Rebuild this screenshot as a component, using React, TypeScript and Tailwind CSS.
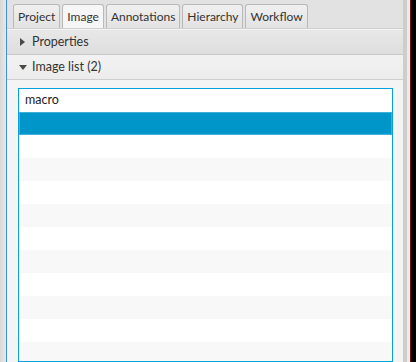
import React from "react";

const tabs = ["Project", "Image", "Annotations", "Hierarchy", "Workflow"];

function Chevron({ open }: { open: boolean }) {
  return (
    <svg width="10" height="10" viewBox="0 0 10 10" className="shrink-0">
      {open ? (
        <polygon points="1,3 9,3 5,8" fill="#4a4a4a" />
      ) : (
        <polygon points="2,1 7,5 2,9" fill="#4a4a4a" />
      )}
    </svg>
  );
}

export default function App() {
  const rows = Array.from({ length: 12 });

  return (
    <div
      className="w-[416px] h-[362px] flex overflow-hidden bg-[#e4e4e4] text-[12px] text-[#333]"
      style={{ fontFamily: "Lato, 'Open Sans', sans-serif" }}
    >
      {/* left gutter */}
      <div className="w-[6px] bg-gradient-to-r from-[#d8d8d8] to-[#e8e8e8]" />

      {/* main pane */}
      <div className="w-[397px] flex flex-col border-l border-[#3b8fdd] bg-[#f4f4f4]">
        {/* tab strip */}
        <div className="h-[29px] bg-[#e2e2e2] flex items-end gap-[2px] pl-[6px] border-b border-[#cfcfcf]">
          {tabs.map((t) => (
            <div
              key={t}
              className={
                "h-[24px] px-[4px] flex items-center rounded-t-[3px] border border-b-0 border-[#b9b9b9] text-[12px] " +
                (t === "Image"
                  ? "bg-[#f6f6f6]"
                  : "bg-gradient-to-b from-[#f0f0f0] to-[#e2e2e2]")
              }
            >
              {t}
            </div>
          ))}
        </div>

        {/* Properties header */}
        <div className="h-[26px] flex items-center gap-[4px] pl-[11px] text-[12.5px] bg-gradient-to-b from-[#e8e8e8] to-[#dedede] border-b border-[#c9c9c9] border-t border-t-[#f4f4f4]">
          <Chevron open={false} />
          <span>Properties</span>
        </div>

        {/* Image list header */}
        <div className="h-[25px] flex items-center gap-[4px] pl-[11px] text-[12.5px] bg-gradient-to-b from-[#f2f2f2] to-[#ececec] border-b border-[#cfcfcf]">
          <Chevron open={true} />
          <span>Image list (2)</span>
        </div>

        {/* list */}
        <div className="flex-1 pt-[8px] pl-[11px] pr-[10px] bg-[#f4f4f4] min-h-0">
          <div className="h-full border border-[#0aa2dc] bg-white overflow-hidden">
            <div className="h-[23px] flex items-center pl-[6px] bg-white text-[#222] text-[12.5px]">
              macro
            </div>
            <div className="h-[23px] bg-[#0096c9] border border-[#3fb0da]" />
            {rows.map((_, i) => (
              <div
                key={i}
                className={"h-[23px] " + (i % 2 === 0 ? "bg-white" : "bg-[#f8f8f8]")}
              />
            ))}
          </div>
        </div>
      </div>

      {/* right edge */}
      <div className="w-[4px] bg-[#cdcdcd]" />
      <div className="w-[3px] bg-[#ebebeb]" />
      <div className="w-[1px] bg-[#6a1010]" />
      <div className="w-[5px] bg-black" />
    </div>
  );
}
